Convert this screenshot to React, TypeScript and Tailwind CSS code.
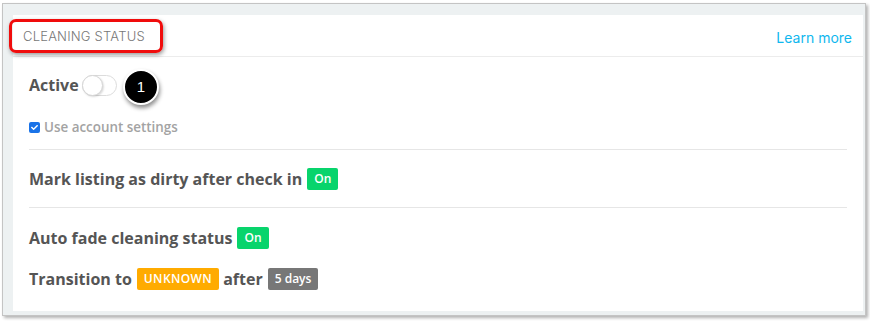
import { FaCheck } from 'react-icons/fa';

const Badge = ({ color, children, wide }: { color: string; children: React.ReactNode; wide?: boolean }) => (
  <span
    className={`ml-[5px] inline-flex h-[22px] items-center rounded-[2px] px-[7px] text-[12px] font-semibold text-white ${color} ${
      wide ? 'tracking-[0.4px]' : ''
    }`}
  >
    {children}
  </span>
);

export default function App() {
  return (
    <div className="h-[322px] w-[870px] bg-white pl-[2px] pt-[3px] font-['Open_Sans',sans-serif]">
      <div className="h-[313px] w-[864px] border border-[#c4c4c4] bg-[#edf1f2] pb-[4px] pl-[10px] pr-[2px] pt-[11px] shadow-[2px_2px_3px_rgba(0,0,0,0.3)]">
        <div className="relative h-full w-full bg-white">
          {/* header */}
          <div className="flex h-[42px] items-center justify-between border-b border-[#ececec] pl-[10px] pr-[11px] pt-[3px]">
            <span className="font-['Inter',sans-serif] text-[13px] font-light tracking-[0.2px] text-[#777]">
              CLEANING STATUS
            </span>
            <a className="font-['Inter',sans-serif] text-[14px] font-normal text-[#10b7ee]">Learn more</a>
          </div>

          {/* annotation highlight */}
          <div className="absolute left-[-4px] top-[4px] h-[34px] w-[154px] rounded-[7px] border-[3.5px] border-[#f00c0c] shadow-[1px_2px_4px_rgba(0,0,0,0.4)]" />

          <div className="px-[16px] pt-[16px] text-[#555]">
            <div className="relative flex h-[24px] items-center">
              <span className="text-[16px] font-bold">Active</span>
              <span className="relative ml-[3px] inline-block h-[21px] w-[35px] rounded-full border border-[#dcdcdc] bg-white">
                <span className="absolute left-[-1px] top-[-1px] h-[21px] w-[21px] rounded-full border border-[#d6d6d6] bg-white shadow-[1px_1px_2px_rgba(0,0,0,0.15)]" />
              </span>
              <span className="absolute left-[94px] top-[-4px] flex h-[36px] w-[36px] items-center justify-center rounded-full border-2 border-white bg-black font-['Liberation_Sans',sans-serif] text-[15px] text-white shadow-[1px_3px_4px_rgba(0,0,0,0.45)]">
                1
              </span>
            </div>

            <div className="mt-[22px] flex h-[16px] items-center">
              <span className="flex h-[11px] w-[11px] items-center justify-center rounded-[2px] bg-[#1a73e8]">
                <FaCheck className="h-[7px] w-[7px] text-white" />
              </span>
              <span className="ml-[4px] text-[13.4px] font-semibold text-[#a3a3a3]">Use account settings</span>
            </div>

            <div className="mt-[14px] border-t border-[#e6e6e6]" />

            <div className="mt-[18px] flex h-[22px] items-center">
              <span className="text-[16px] font-bold">Mark listing as dirty after check in</span>
              <Badge color="bg-[#08d46c]">On</Badge>
            </div>

            <div className="mt-[17px] border-t border-[#e6e6e6]" />

            <div className="mt-[18px] flex h-[23px] items-center">
              <span className="text-[16px] font-bold">Auto fade cleaning status</span>
              <Badge color="bg-[#08d46c]">On</Badge>
            </div>

            <div className="mt-[19px] flex h-[22px] items-center">
              <span className="text-[16px] font-bold">Transition to</span>
              <Badge color="bg-[#ffab00]" wide>
                UNKNOWN
              </Badge>
              <span className="ml-[4px] text-[16px] font-bold">after</span>
              <Badge color="bg-[#777]">5 days</Badge>
            </div>
          </div>
        </div>
      </div>
    </div>
  );
}
